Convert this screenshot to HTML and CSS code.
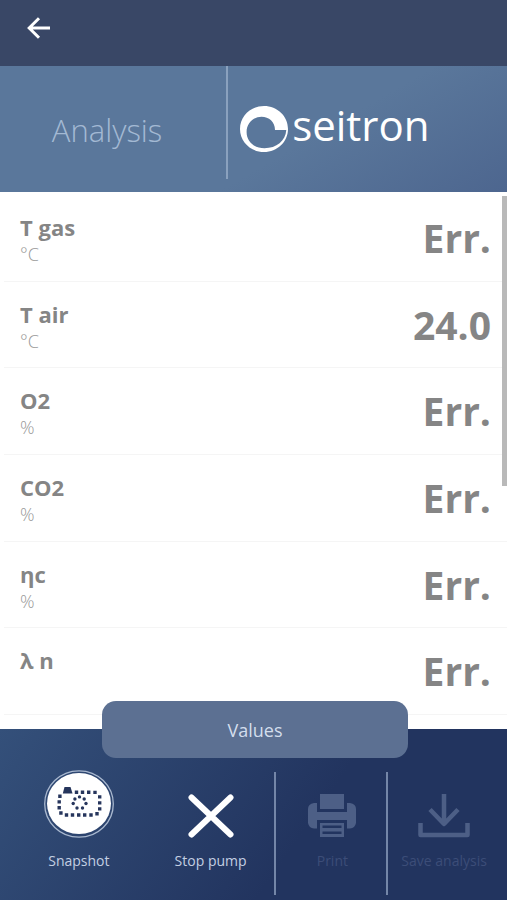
FILE: index.html
```html
<!DOCTYPE html>
<html lang="en">
<head>
<meta charset="utf-8">
<meta name="viewport" content="width=device-width, initial-scale=1">
<title>Analysis</title>
<link rel="stylesheet" href="styles.css">
</head>
<body>
<nav class="topbar">
  <button class="back" aria-label="Back">
    <svg width="24" height="22" viewBox="0 0 24 22" fill="none" stroke="#fff" stroke-width="3"><path d="M23 11H3M12 1.200L2.200 11L12 20.800"/></svg>
  </button>
</nav>
<header class="header">
  <h1 class="title">Analysis</h1>
  <div class="brand">
    <svg width="48" height="46" viewBox="0 0 48 46"><path fill="#fff" fill-rule="evenodd" d="M24 0C37.300 0 48 10.200 48 23S37.300 46 24 46S0 35.800 0 23S10.700 0 24 0ZM35 24C35 16 29 10.800 21.500 10.800C13 10.800 6.600 17.600 6.600 26C6.600 35.500 14 42.200 24.500 42.200C36.500 42.200 45.500 35 46.300 24Z"/></svg>
    <span class="wordmark">seitron</span>
  </div>
</header>
<main class="readings">
  <div class="row"><div class="label"><h2 class="name">T gas</h2><p class="unit">°C</p></div><span class="value">Err.</span></div>
  <div class="row"><div class="label"><h2 class="name">T air</h2><p class="unit">°C</p></div><span class="value">24.0</span></div>
  <div class="row"><div class="label"><h2 class="name">O2</h2><p class="unit">%</p></div><span class="value">Err.</span></div>
  <div class="row"><div class="label"><h2 class="name">CO2</h2><p class="unit">%</p></div><span class="value">Err.</span></div>
  <div class="row"><div class="label"><h2 class="name">ηc</h2><p class="unit">%</p></div><span class="value">Err.</span></div>
  <div class="row"><div class="label"><h2 class="name">λ n</h2><p class="unit"></p></div><span class="value">Err.</span></div>
  <div class="scrollbar"></div>
</main>
<footer class="footer">
  <button class="values">Values</button>
  <div class="actions">
    <button class="action">
      <span class="icon"><svg width="70" height="68" viewBox="0 0 70 68" fill="none">
        <ellipse cx="35" cy="34" rx="34.300" ry="33.200" stroke="#a9b8cf" stroke-width="1.300"/>
        <ellipse cx="35" cy="33.500" rx="32" ry="30.500" fill="#fff"/>
        <g fill="#26355c">
          <path d="M20.500 17H26.500L28.500 23.500H18.800Z"/>
          <path d="M30.800 20.500h3.400v3.400h-3.400zM36.800 20.500h3.400v3.400h-3.400zM43 20.500h3.400v3.400h-3.400zM49.300 20.700h3.400v3.400h-3.400zM54 25.200h3.400v3.400h-3.400zM54 31.200h3.400v3.400h-3.400zM54 37.200h3.400v3.400h-3.400zM51.300 42h3.400v3.400h-3.400zM45.300 43.300h3.400v3.400h-3.400zM39 43.300h3.400v3.400h-3.400zM33 43.300h3.400v3.400h-3.400zM26.800 43.300h3.400v3.400h-3.400zM20.800 43.300h3.400v3.400h-3.400zM15.200 41.300h3.400v3.400h-3.400zM13.500 36h3.400v3.400h-3.400zM13.500 30.200h3.400v3.400h-3.400zM14.200 24.500h3.400v3.400h-3.400z"/>
          <circle cx="35.500" cy="26.900" r="1.700"/><circle cx="40.200" cy="29" r="1.700"/><circle cx="42" cy="33.500" r="1.700"/><circle cx="38.500" cy="38" r="1.700"/><circle cx="33" cy="38" r="1.700"/><circle cx="29.200" cy="33.500" r="1.700"/><circle cx="30.900" cy="29" r="1.700"/>
        </g>
      </svg></span>
      Snapshot
    </button>
    <button class="action">
      <span class="icon"><svg width="46" height="44" viewBox="0 0 46 44" stroke="#fff" stroke-width="6" stroke-linecap="round"><path d="M3.500 3.500L42.500 40.500M42.500 3.500L3.500 40.500"/></svg></span>
      Stop pump
    </button>
    <button class="action divided" disabled>
      <span class="icon"><svg width="48" height="44" viewBox="0 0 48 44" fill="#4d5f86">
        <path d="M12 0H36V15H12Z"/>
        <path d="M9 9V18H39V9H42Q48 10 48 15V29Q47 34 42 34.500H39V26H9V34.500H6Q1 34 0 29V15Q0 10 6 9Z"/>
        <path fill-rule="evenodd" d="M12 29H36V43H12ZM14.500 31.500V34H33.500V31.500ZM14.500 37.500V40H33.500V37.500Z"/>
      </svg></span>
      Print
    </button>
    <button class="action divided" disabled>
      <span class="icon"><svg width="52" height="44" viewBox="0 0 52 44" fill="none" stroke="#4d5f86" stroke-width="4.500"><path d="M26 0V30M12 15.500L26 30L40 15.500M2.500 29V41H49.500V29" stroke-linejoin="round"/></svg></span>
      Save analysis
    </button>
  </div>
</footer>
</body>
</html>
```
FILE: styles.css
```css
* {
  box-sizing: border-box;
}

body {
  margin: 0;
  height: 100vh;
  display: flex;
  flex-direction: column;
  overflow: hidden;
  background: #fff;
  font-family: "Open Sans", "Noto Sans", sans-serif;
}

button {
  border: 0;
  padding: 0;
  background: none;
  font-family: inherit;
}

svg {
  display: block;
}

h1,
h2,
p {
  margin: 0;
}

.topbar {
  flex: none;
  padding: 17px 27px 27px;
  background: #394766;
}

.back {
  display: block;
}

.header {
  flex: none;
  height: 126px;
  display: grid;
  grid-template-columns: 45fr 55fr;
  align-items: start;
  background: linear-gradient(150deg, #5a779b 60%, #4d668f);
}

.title {
  height: 113px;
  padding-right: 12px;
  border-right: 2px solid #8aa1be;
  color: #a3b9d3;
  font-size: 31px;
  font-weight: 300;
  line-height: 128px;
  text-align: center;
}

.brand {
  height: 126px;
  padding-left: 12px;
  display: flex;
  align-items: center;
  gap: 4px;
}

.wordmark {
  padding-bottom: 8px;
  color: #fff;
  font-size: 42px;
  font-weight: 500;
  line-height: 48px;
}

.readings {
  position: relative;
  flex: 1;
  min-height: 0;
  padding: 3px 0 14px 4px;
  display: flex;
  flex-direction: column;
}

.row {
  flex: 1;
  padding: 0 16px;
  display: flex;
  justify-content: space-between;
  align-items: center;
  border-bottom: 1px solid #f5f5f5;
}

.label {
  padding-top: 4px;
}

.name {
  color: #858585;
  font-size: 22px;
  font-weight: 700;
  line-height: 28px;
}

.unit {
  height: 26px;
  color: #999;
  font-size: 18px;
  font-weight: 300;
  line-height: 26px;
}

.value {
  color: #858585;
  font-size: 39px;
  font-weight: 700;
  line-height: 56px;
}

.scrollbar {
  position: absolute;
  top: 4px;
  right: 0;
  width: 5px;
  height: 54%;
  background: #b9b9b9;
}

.footer {
  position: relative;
  flex: none;
  padding: 40px 7px 5px 13px;
  background: linear-gradient(125deg, #34507a, #22345f 60%);
}

.values {
  position: absolute;
  top: -28px;
  left: 102px;
  right: 99px;
  height: 57px;
  border-radius: 14px;
  background: #5c7092;
  color: #d3deed;
  font-size: 18px;
}

.actions {
  display: grid;
  grid-template-columns: 132fr 132fr 112fr 112fr;
}

.action {
  height: 126px;
  color: #c3cfe2;
  font-size: 14px;
  line-height: 20px;
  white-space: nowrap;
  display: flex;
  flex-direction: column;
  align-items: center;
}

.action:disabled {
  color: #3c4d78;
}

.divided {
  position: relative;
}

.divided::before {
  content: "";
  position: absolute;
  top: 3px;
  left: -2px;
  width: 2px;
  height: 123px;
  background: #7486a8;
}

.icon {
  height: 82px;
  display: flex;
  align-items: center;
  padding-top: 12px;
}

.action:first-child .icon {
  padding: 0 0 12px;
}
```
